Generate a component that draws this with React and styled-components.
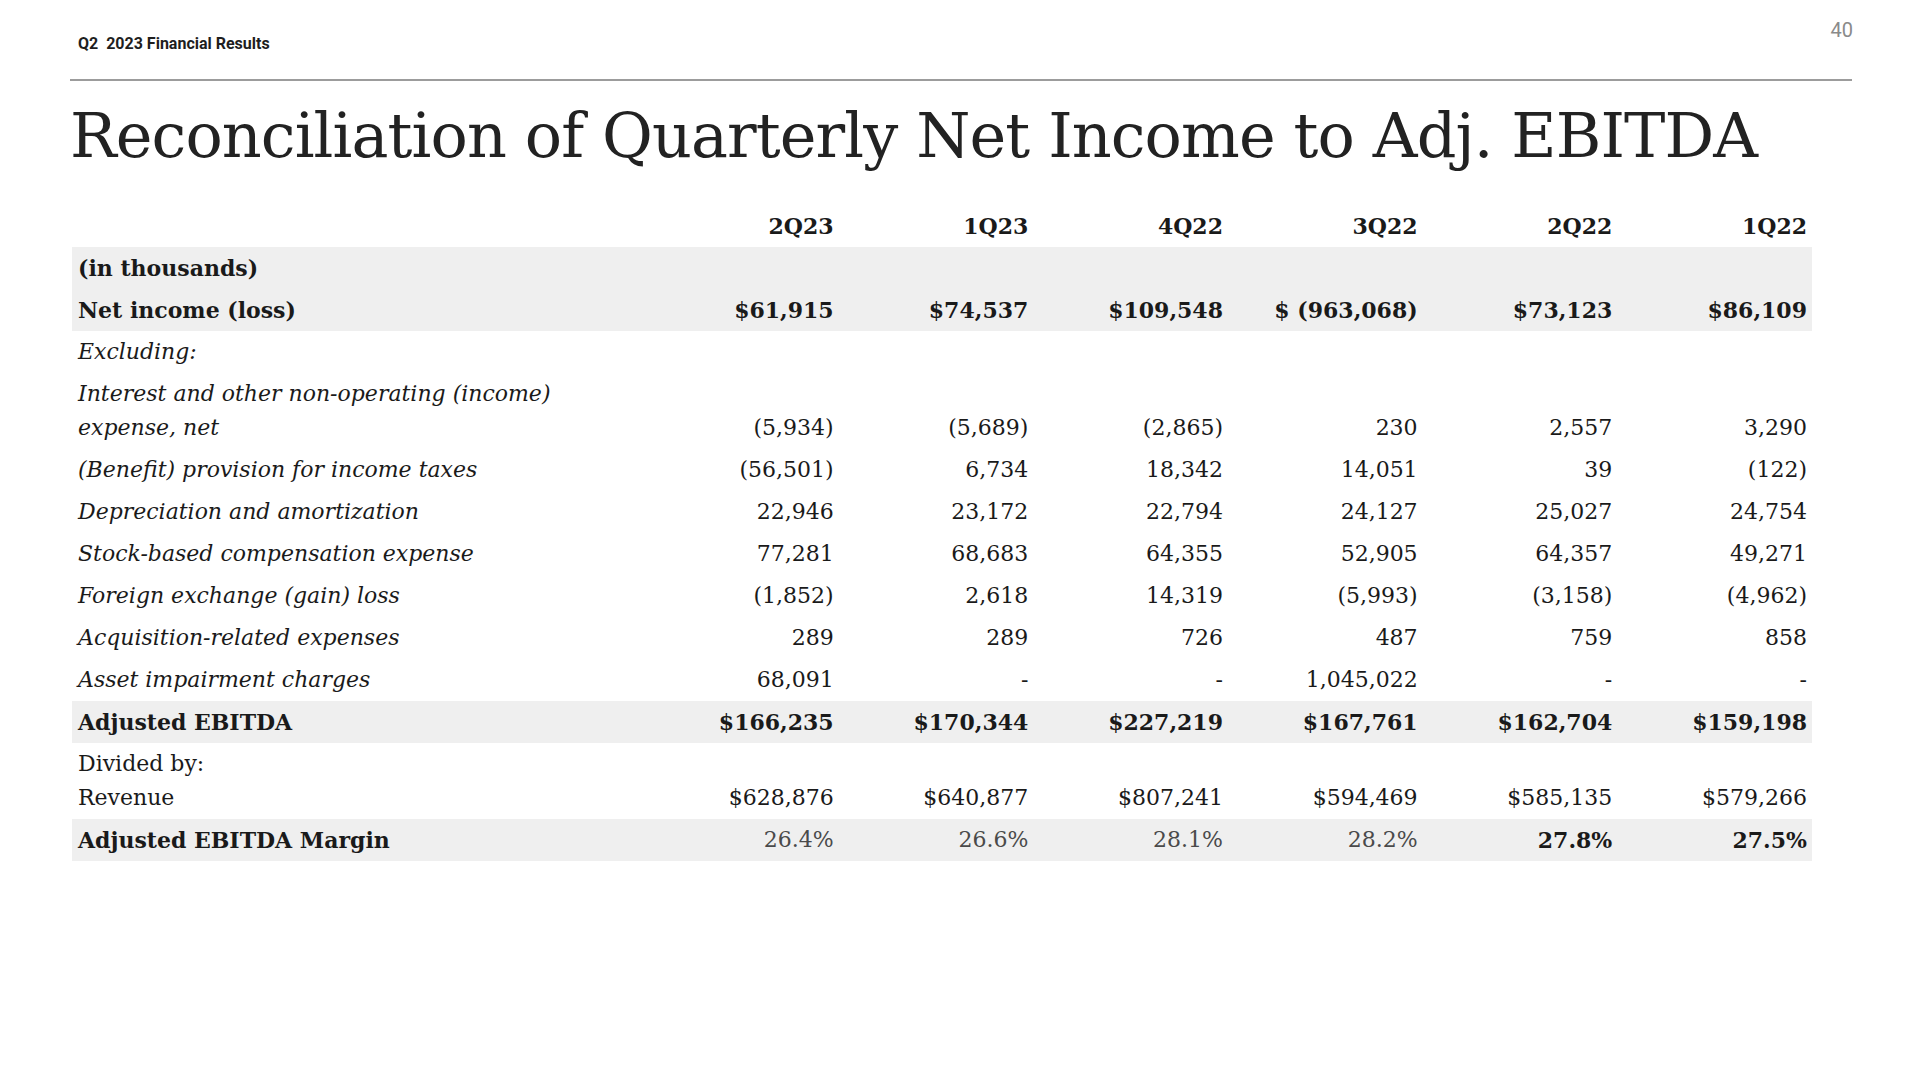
import React from "react";
import styled, { createGlobalStyle, css } from "styled-components";

const GlobalStyle = createGlobalStyle`
  html, body {
    margin: 0;
    padding: 0;
    background: #fff;
  }
`;

const quarters = ["2Q23", "1Q23", "4Q22", "3Q22", "2Q22", "1Q22"];

const rows = [
  { label: "(in thousands)", kind: "bold", shade: true, values: [] },
  {
    label: "Net income (loss)",
    kind: "bold",
    shade: true,
    bold: true,
    values: ["$61,915", "$74,537", "$109,548", "$ (963,068)", "$73,123", "$86,109"]
  },
  { label: "Excluding:", kind: "italic", values: [] },
  {
    label: ["Interest and other non-operating (income)", "expense, net"],
    kind: "italic",
    values: ["(5,934)", "(5,689)", "(2,865)", "230", "2,557", "3,290"]
  },
  {
    label: "(Benefit) provision for income taxes",
    kind: "italic",
    values: ["(56,501)", "6,734", "18,342", "14,051", "39", "(122)"]
  },
  {
    label: "Depreciation and amortization",
    kind: "italic",
    values: ["22,946", "23,172", "22,794", "24,127", "25,027", "24,754"]
  },
  {
    label: "Stock-based compensation expense",
    kind: "italic",
    values: ["77,281", "68,683", "64,355", "52,905", "64,357", "49,271"]
  },
  {
    label: "Foreign exchange (gain) loss",
    kind: "italic",
    values: ["(1,852)", "2,618", "14,319", "(5,993)", "(3,158)", "(4,962)"]
  },
  {
    label: "Acquisition-related expenses",
    kind: "italic",
    values: ["289", "289", "726", "487", "759", "858"]
  },
  {
    label: "Asset impairment charges",
    kind: "italic",
    values: ["68,091", "-", "-", "1,045,022", "-", "-"]
  },
  {
    label: "Adjusted EBITDA",
    kind: "bold",
    shade: true,
    bold: true,
    values: ["$166,235", "$170,344", "$227,219", "$167,761", "$162,704", "$159,198"]
  },
  {
    label: ["Divided by:", "Revenue"],
    kind: "plain",
    values: ["$628,876", "$640,877", "$807,241", "$594,469", "$585,135", "$579,266"]
  },
  {
    label: "Adjusted EBITDA Margin",
    kind: "bold",
    shade: true,
    margin: true,
    values: ["26.4%", "26.6%", "28.1%", "28.2%", "27.8%", "27.5%"]
  }
];

export default function App() {
  return (
    <>
      <GlobalStyle />
      <Slide>
        <TopBar>
          <DeckLabel>Q2&nbsp; 2023 Financial Results</DeckLabel>
          <PageNumber>40</PageNumber>
        </TopBar>
        <Rule />
        <Title>Reconciliation of Quarterly Net Income to Adj. EBITDA</Title>
        <Table>
          <colgroup>
            <col style={{ width: 572 }} />
            {quarters.map(q => (
              <col key={q} />
            ))}
          </colgroup>
          <thead>
            <tr>
              <HeadCell />
              {quarters.map(q => (
                <HeadCell key={q}>{q}</HeadCell>
              ))}
            </tr>
          </thead>
          <tbody>
            {rows.map((row, i) => {
              const lines = Array.isArray(row.label) ? row.label : [row.label];
              return (
                <Row key={i} $shade={row.shade}>
                  <LabelCell $kind={row.kind}>
                    {lines.map((l, j) => (
                      <div key={j}>{l}</div>
                    ))}
                  </LabelCell>
                  {quarters.map((q, j) => (
                    <ValueCell
                      key={q}
                      $bold={row.bold || (row.margin && j >= 4)}
                      $muted={row.margin && j < 4}
                    >
                      {row.values[j] || ""}
                    </ValueCell>
                  ))}
                </Row>
              );
            })}
          </tbody>
        </Table>
      </Slide>
    </>
  );
}

const Slide = styled.div`
  width: 1920px;
  height: 1080px;
  background: #fff;
  display: flex;
  flex-direction: column;
  overflow: hidden;
`;

const TopBar = styled.div`
  height: 79px;
  display: flex;
  justify-content: space-between;
  align-items: flex-start;
  padding: 0 67px 0 78px;
  font-family: Roboto, "Liberation Sans", sans-serif;
`;

const DeckLabel = styled.div`
  margin-top: 35px;
  font-size: 16px;
  line-height: 18px;
  font-weight: 700;
  color: #1e1e1e;
`;

const PageNumber = styled.div`
  margin-top: 18px;
  font-size: 20px;
  line-height: 24px;
  color: #8a8a8a;
`;

const Rule = styled.div`
  height: 2px;
  margin: 0 68px 0 70px;
  background: #9c9c9c;
`;

const Title = styled.h1`
  margin: 10px 0 0 70px;
  font-family: "DejaVu Serif", "Liberation Serif", serif;
  font-weight: 400;
  font-size: 62px;
  letter-spacing: -0.9px;
  line-height: 90px;
  color: #222;
  white-space: nowrap;
`;

const Table = styled.table`
  margin: 24px 0 0 72px;
  width: 1740px;
  border-collapse: collapse;
  table-layout: fixed;
  font-family: "DejaVu Serif", "Liberation Serif", serif;
  font-size: 22px;
  color: #1a1a1a;
`;

const HeadCell = styled.th`
  height: 42px;
  padding: 0 5px 0 6px;
  text-align: right;
  font-weight: 700;
  vertical-align: middle;
`;

const Row = styled.tr`
  ${props =>
    props.$shade &&
    css`
      background: #efefef;
    `}
`;

const LabelCell = styled.td`
  padding: 4px 6px;
  line-height: 34px;
  text-align: left;
  vertical-align: bottom;
  white-space: nowrap;

  ${props =>
    props.$kind === "bold" &&
    css`
      font-weight: 700;
    `}

  ${props =>
    props.$kind === "italic" &&
    css`
      font-style: italic;
    `}
`;

const ValueCell = styled.td`
  padding: 4px 5px 4px 6px;
  line-height: 34px;
  text-align: right;
  vertical-align: bottom;
  white-space: nowrap;
  font-weight: ${props => (props.$bold ? 700 : 400)};
  color: ${props => (props.$muted ? "#4a4a4a" : "#1a1a1a")};
`;
